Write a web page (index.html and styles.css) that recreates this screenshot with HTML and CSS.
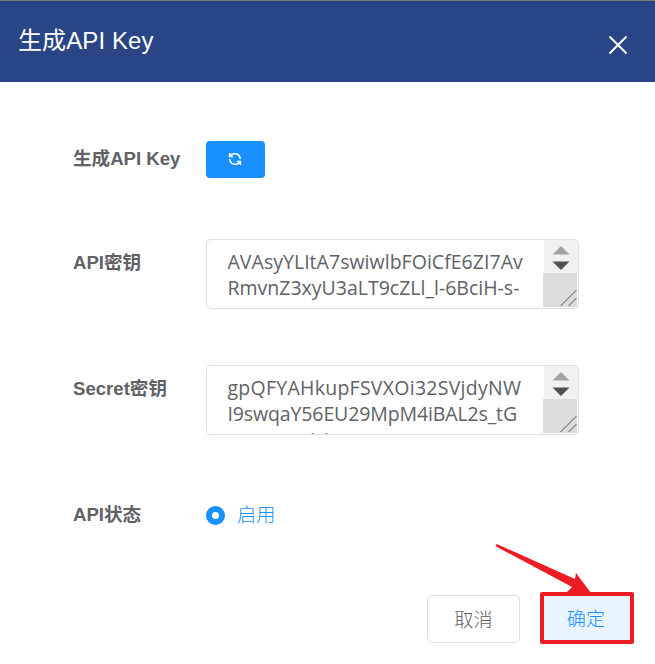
FILE: index.html
```html
<!DOCTYPE html>
<html lang="zh-CN">
<head>
<meta charset="utf-8">
<title>生成API Key</title>
<link rel="stylesheet" href="styles.css">
</head>
<body>
<div class="dialog">
  <header class="header">
    <h1 class="title">生成API Key</h1>
    <svg class="close" viewBox="0 0 20 20"><path d="M1.5 1.5L18.5 18.5M18.5 1.5L1.5 18.5"/></svg>
  </header>
  <main class="form">
    <div class="row row-generate">
      <label class="label">生成API Key</label>
      <button class="refresh" aria-label="生成">
        <svg viewBox="0 0 14 14"><path d="M1.6 1V4.500H5M1.800 4.300C4 .500 11.500.300 12.300 7M12.400 13V9.500H9M12.200 9.700C10 13.500 2.500 13.700 1.700 7"/></svg>
      </button>
    </div>
    <div class="row row-key">
      <label class="label">API密钥</label>
      <div class="textarea">
        <div class="value"><span class="line k1">AVAsyYLItA7swiwlbFOiCfE6ZI7Av</span><span class="line k2">RmvnZ3xyU3aLT9cZLl_l-6BciH-s-</span></div>
        <svg class="scroll" viewBox="0 0 36 68"><path fill="#f1f1f1" d="M1 0H36V34H1z"/><path fill="#dcdcdc" d="M0 33H34V67H0z"/><path fill="#a3a3a3" d="M18 6L26.5 14.5H9.5z"/><path fill="#505050" d="M9.5 21.500H26.500L18 30z"/><path class="grip" d="M17.500 66L33.500 50M25.500 66L33.500 58"/></svg>
      </div>
    </div>
    <div class="row row-key">
      <label class="label">Secret密钥</label>
      <div class="textarea">
        <div class="value"><span class="line s1">gpQFYAHkupFSVXOi32SVjdyNW</span><span class="line s2">I9swqaY56EU29MpM4iBAL2s_tG</span><span class="line s3">nmcosuvisi</span></div>
        <svg class="scroll" viewBox="0 0 36 68"><path fill="#f1f1f1" d="M1 0H36V34H1z"/><path fill="#dcdcdc" d="M0 33H34V67H0z"/><path fill="#a3a3a3" d="M18 6L26.5 14.5H9.5z"/><path fill="#505050" d="M9.5 21.500H26.500L18 30z"/><path class="grip" d="M17.500 66L33.500 50M25.500 66L33.500 58"/></svg>
      </div>
    </div>
    <div class="row row-status">
      <label class="label">API状态</label>
      <span class="radio"></span><span class="radio-text">启用</span>
    </div>
  </main>
  <footer class="footer">
    <button class="button">取消</button>
    <button class="button confirm">确定</button>
  </footer>
  <svg class="arrow" viewBox="0 0 100 50"><path d="M1 .5Q2 0 4 1L80 35L81 29L96 49H71L77 43L2 3Q0 2 1 .5z"/></svg>
</div>
</body>
</html>
```

FILE: styles.css
```css
* { box-sizing: border-box; }
body { margin: 0; background: #fff; font-family: "Liberation Sans", "Noto Sans CJK SC", sans-serif; color: #606266; }
button { font-family: inherit; padding: 0; border: 0; }
.dialog { position: relative; width: 655px; height: 664px; overflow: hidden; }
.header { height: 82px; background: #2a4585; border-top: 1px solid #777; display: flex; justify-content: space-between; padding: 22px 27px 0 18px; }
.title { margin: 0; font-size: 24px; font-weight: 400; line-height: 36px; letter-spacing: .1px; color: #fff; white-space: nowrap; }
.close { width: 20px; height: 20px; margin-top: 12px; fill: none; stroke: #fff; stroke-width: 2; }
.form { padding: 59px 76px 0 73px; }
.row { display: flex; }
.label { width: 133px; flex: none; font-size: 18.6px; font-weight: 700; line-height: 36px; white-space: nowrap; }
.row-generate { height: 98px; }
.refresh { width: 59px; height: 37px; border-radius: 4px; background: #1890ff; display: flex; align-items: center; justify-content: center; padding: 0 1px 1px 0; }
.refresh svg { width: 14px; height: 14px; fill: none; stroke: #fff; stroke-width: 1.5; }
.row-key { height: 126px; }
.row-key .label { padding-top: 6px; }
.textarea { width: 373px; height: 70px; border: 1px solid #dcdfe6; border-radius: 5px; display: flex; overflow: hidden; }
.value { width: 336px; flex: none; padding: 8px 0 0 20.5px; font: 19.5px/27px "Open Sans", sans-serif; white-space: nowrap; }
.line { display: block; }
.k1 { letter-spacing: .03px; }
.k2, .s2 { margin-top: -1px; }
.s1 { letter-spacing: .26px; }
.s2 { letter-spacing: -.12px; }
.s3 { margin-top: -1px; padding-left: 1px; letter-spacing: -.1px; }
.scroll { width: 36px; height: 68px; flex: none; margin-right: -1px; }
.grip { fill: none; stroke: #505050; stroke-width: 1; }
.row-status { height: 36px; align-items: center; margin-top: 6px; }
.radio { width: 19px; height: 19px; border: 6.5px solid #1890ff; border-radius: 50%; }
.radio-text { margin-left: 12px; font-size: 19.2px; font-weight: 300; color: #1890ff; line-height: 36px; padding-top: 1px; }
.footer { display: flex; justify-content: flex-end; gap: 20px; padding: 62px 21px 0 0; }
.button { width: 93px; height: 48px; padding-bottom: 1px; border: 1px solid #dcdfe6; border-radius: 5px; background: #fff; color: #606266; font-size: 19.2px; font-weight: 300; }
.confirm { width: 94px; height: 52px; margin-top: -3px; padding-right: 2px; padding-bottom: 0; border: 4px solid #ed1c24; border-radius: 2px; background: #e8f4ff; color: #1890ff; }
.arrow { position: absolute; left: 495px; top: 544px; width: 100px; height: 50px; fill: #ed1c24; }
```
